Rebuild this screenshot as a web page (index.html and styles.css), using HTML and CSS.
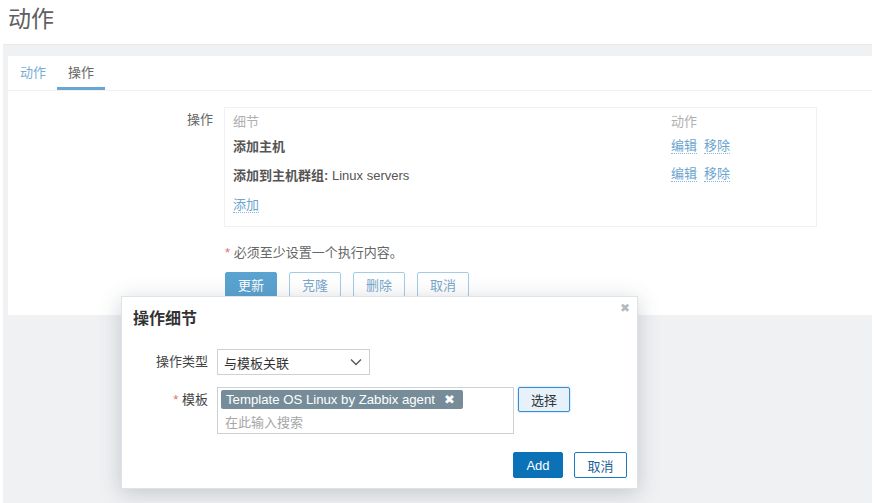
FILE: index.html
```html
<!DOCTYPE html>
<html lang="zh">
<head>
<meta charset="utf-8">
<link rel="stylesheet" href="styles.css">
</head>
<body>
<div class="page">
  <header class="page-head"><h1>动作</h1></header>
  <main class="wrap">
    <section class="panel">
      <nav class="tabs">
        <span class="tab">动作</span>
        <span class="tab active">操作</span>
      </nav>
      <div class="form">
        <div class="form-row">
          <label class="lbl">操作</label>
          <div class="ops-box">
            <div class="ops-row head"><span class="c1">细节</span><span class="c2">动作</span></div>
            <div class="ops-row r1"><span class="c1"><b>添加主机</b></span><span class="c2"><a class="lnk">编辑</a><a class="lnk">移除</a></span></div>
            <div class="ops-row r2"><span class="c1"><b>添加到主机群组:</b> Linux servers</span><span class="c2"><a class="lnk">编辑</a><a class="lnk">移除</a></span></div>
            <div class="ops-row r3"><span class="c1"><a class="lnk">添加</a></span></div>
          </div>
        </div>
        <div class="note"><span class="star">*</span> 必须至少设置一个执行内容。</div>
        <div class="btns">
          <button class="btn primary">更新</button>
          <button class="btn alt">克隆</button>
          <button class="btn alt">删除</button>
          <button class="btn alt">取消</button>
        </div>
      </div>
    </section>
  </main>

  <div class="dialog">
    <span class="close">✖</span>
    <h2>操作细节</h2>
    <div class="dform">
      <label class="dlbl">操作类型</label>
      <div class="select"><span>与模板关联</span>
        <svg width="12" height="8" viewBox="0 0 12 8"><path d="M1 1.5 L6 6.5 L11 1.5" fill="none" stroke="#555" stroke-width="1.3"/></svg>
      </div>
      <label class="dlbl"><span class="star">*</span> 模板</label>
      <div class="ms-line">
        <div class="ms">
          <span class="chip">Template OS Linux by Zabbix agent <span class="x">✖</span></span>
          <span class="ph">在此输入搜索</span>
        </div>
        <button class="btn sel">选择</button>
      </div>
    </div>
    <div class="dfoot">
      <button class="btn add">Add</button>
      <button class="btn cancel">取消</button>
    </div>
  </div>
</div>
</body>
</html>
```

FILE: styles.css
```css
* { box-sizing: border-box; }
html, body { margin: 0; padding: 0; background: #fff; }
body {
  font-family: "Liberation Sans", "Noto Sans CJK SC", sans-serif;
  font-size: 13px;
  color: #555;
  width: 875px;
  height: 503px;
  overflow: hidden;
}
.page { position: relative; width: 875px; height: 503px; }
.page-head { height: 44px; padding: 4px 0 0 8px; }
.page-head h1 {
  margin: 0;
  font-weight: normal;
  font-size: 23px;
  line-height: 30px;
  color: #606060;
}
.wrap {
  margin: 0 3px 0 3px;
  background: #f0f1f3;
  border-top: 1px solid #e6e8ea;
  padding: 11px 0 0 5px;
  height: 459px;
}
.panel { background: #fff; height: 259px; }
.tabs {
  display: flex;
  height: 35px;
  padding-left: 1px;
  border-bottom: 1px solid #eef0f1;
}
.tab {
  padding: 0 11px;
  line-height: 33px;
  color: #79acd4;
  border-bottom: 3px solid transparent;
  height: 34px;
}
.tab.active { color: #666; border-bottom-color: #6aa6d2; }
.form { padding: 16px 0 0 0; }
.form-row { display: flex; align-items: flex-start; }
.lbl {
  width: 205px;
  text-align: right;
  margin-right: 11px;
  line-height: 26px;
  color: #666;
}
.ops-box {
  width: 593px;
  height: 120px;
  border: 1px solid #f1f1f1;
  padding: 0 8px 0 8px;
}
.ops-row { display: flex; align-items: center; }
.ops-row .c1 { width: 438px; }
.ops-row .c2 { display: flex; gap: 7px; }
.ops-row.head { height: 24px; color: #b0b0b0; }
.ops-row.r1 { height: 27px; }
.ops-row.r2 { height: 30px; }
.ops-row.r3 { height: 30px; }
.ops-row b { color: #555; }
.lnk {
  color: #6aa5d0;
  border-bottom: 1px dotted #8ab8dc;
  line-height: 15px;
  cursor: pointer;
}
.note { margin: 16px 0 0 217px; line-height: 19px; color: #666; }
.star { color: #e07070; }
.btns { display: flex; gap: 12px; margin: 10px 0 0 217px; }
.btn {
  font-family: "Liberation Sans", "Noto Sans CJK SC", sans-serif;
  font-size: 13px;
  height: 25px;
  width: 52px;
  padding: 0;
  border-radius: 2px;
  cursor: pointer;
}
.btn.primary { background: #5aa3d0; border: 1px solid #5aa3d0; color: #fff; }
.btn.alt { background: #fff; border: 1px solid #a6cbe5; color: #78a7cc; }

.dialog {
  position: absolute;
  left: 121px;
  top: 296px;
  width: 517px;
  height: 193px;
  background: #fff;
  border: 1px solid #dfe3e6;
  box-shadow: 0 4px 20px rgba(60, 75, 90, 0.25);
  padding: 0 10px 0 11px;
}
.close {
  position: absolute;
  right: 7px;
  top: 4px;
  font-size: 12px;
  color: #b3b9bd;
}
.dialog h2 {
  margin: 0;
  padding-top: 12px;
  height: 52px;
  font-size: 16px;
  line-height: 20px;
  font-weight: bold;
  color: #333;
}
.dform {
  display: grid;
  grid-template-columns: 75px auto;
  column-gap: 9px;
  row-gap: 12px;
  align-items: start;
}
.dlbl { text-align: right; line-height: 26px; color: #444; }
.select {
  width: 153px;
  height: 26px;
  border: 1px solid #cbd1d5;
  display: flex;
  align-items: center;
  justify-content: space-between;
  padding: 0 7px 0 6px;
  color: #333;
}
.ms-line { display: flex; align-items: flex-start; gap: 4px; }
.ms {
  width: 297px;
  height: 47px;
  border: 1px solid #cbd1d5;
  padding: 2px 3px;
  display: flex;
  flex-direction: column;
  align-items: flex-start;
}
.chip {
  background: #768c98;
  color: #fff;
  height: 19px;
  line-height: 19px;
  padding: 0 8px 0 5px;
  font-size: 13.2px;
  border-radius: 2px;
}
.chip .x { margin-left: 5px; font-size: 13px; }
.ph { color: #a6a6a6; margin-top: 6px; padding-left: 4px; line-height: 16px; }
.btn.sel {
  background: #e6f1fb;
  border: 1px solid #3a8ccc;
  box-shadow: 0 0 2px #8cc0e8;
  color: #333;
  height: 25px;
  width: 52px;
}
.dfoot {
  display: flex;
  justify-content: flex-end;
  gap: 11px;
  margin-top: 18px;
}
.btn.add { background: #0c72b8; border: 1px solid #0c72b8; color: #fff; width: 50px; height: 26px; }
.btn.cancel { background: #fff; border: 1px solid #1a7ac0; color: #1e5f98; width: 53px; height: 26px; }
```
